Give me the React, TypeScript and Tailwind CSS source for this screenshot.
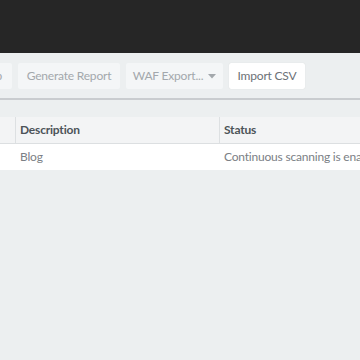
export default function App() {
  return (
    <div className="h-[360px] w-[360px] overflow-hidden bg-[#eceff0] font-['Lato','Liberation_Sans',sans-serif] text-[12px] tracking-[-0.2px]">
      <div className="h-[53px] bg-[#262626]" />
      <div className="flex gap-[6px] border-b-2 border-[#c9cccf] pt-[10px] pb-[9px]">
        <button className="ml-[-58px] h-[26px] w-[70px] shrink-0 rounded-[2px] bg-[#f4f6f7] px-[10px] text-right text-[#a3a8ac]">Job</button>
        <button className="h-[26px] w-[102px] shrink-0 rounded-[2px] bg-[#f4f6f7] text-[#a3a8ac]">Generate Report</button>
        <button className="flex h-[26px] w-[97px] shrink-0 items-center justify-center gap-[5px] rounded-[2px] bg-[#f4f6f7] text-[#a3a8ac]">
          WAF Export...
          <svg width="8" height="5" viewBox="0 0 8 5"><path d="M0 0h8L4 4.5z" fill="#a3a8ac" /></svg>
        </button>
        <button className="h-[26px] w-[76px] shrink-0 rounded-[2px] bg-white text-[#6c7176] shadow-[0_0_1px_rgba(0,0,0,0.15)]">Import CSV</button>
      </div>
      <div className="mt-[17px] ml-[-100px] flex w-[560px] flex-col">
        <div className="flex h-[27px] border-b border-[#dcdfe1] bg-[#f3f4f5] font-bold text-[#4c5358]">
          <div className="w-[116px] shrink-0 border-r border-[#dde0e2]" />
          <div className="flex w-[204px] shrink-0 items-center border-r border-[#dde0e2] pl-[4px]">Description</div>
          <div className="flex w-[240px] shrink-0 items-center pl-[4px]">Status</div>
        </div>
        <div className="flex h-[26px] bg-white text-[#7b8085]">
          <div className="w-[116px] shrink-0" />
          <div className="flex w-[204px] shrink-0 items-center pl-[4px]">Blog</div>
          <div className="flex w-[240px] shrink-0 items-center whitespace-nowrap pl-[4px]">Continuous scanning is enabled</div>
        </div>
      </div>
    </div>
  );
}
